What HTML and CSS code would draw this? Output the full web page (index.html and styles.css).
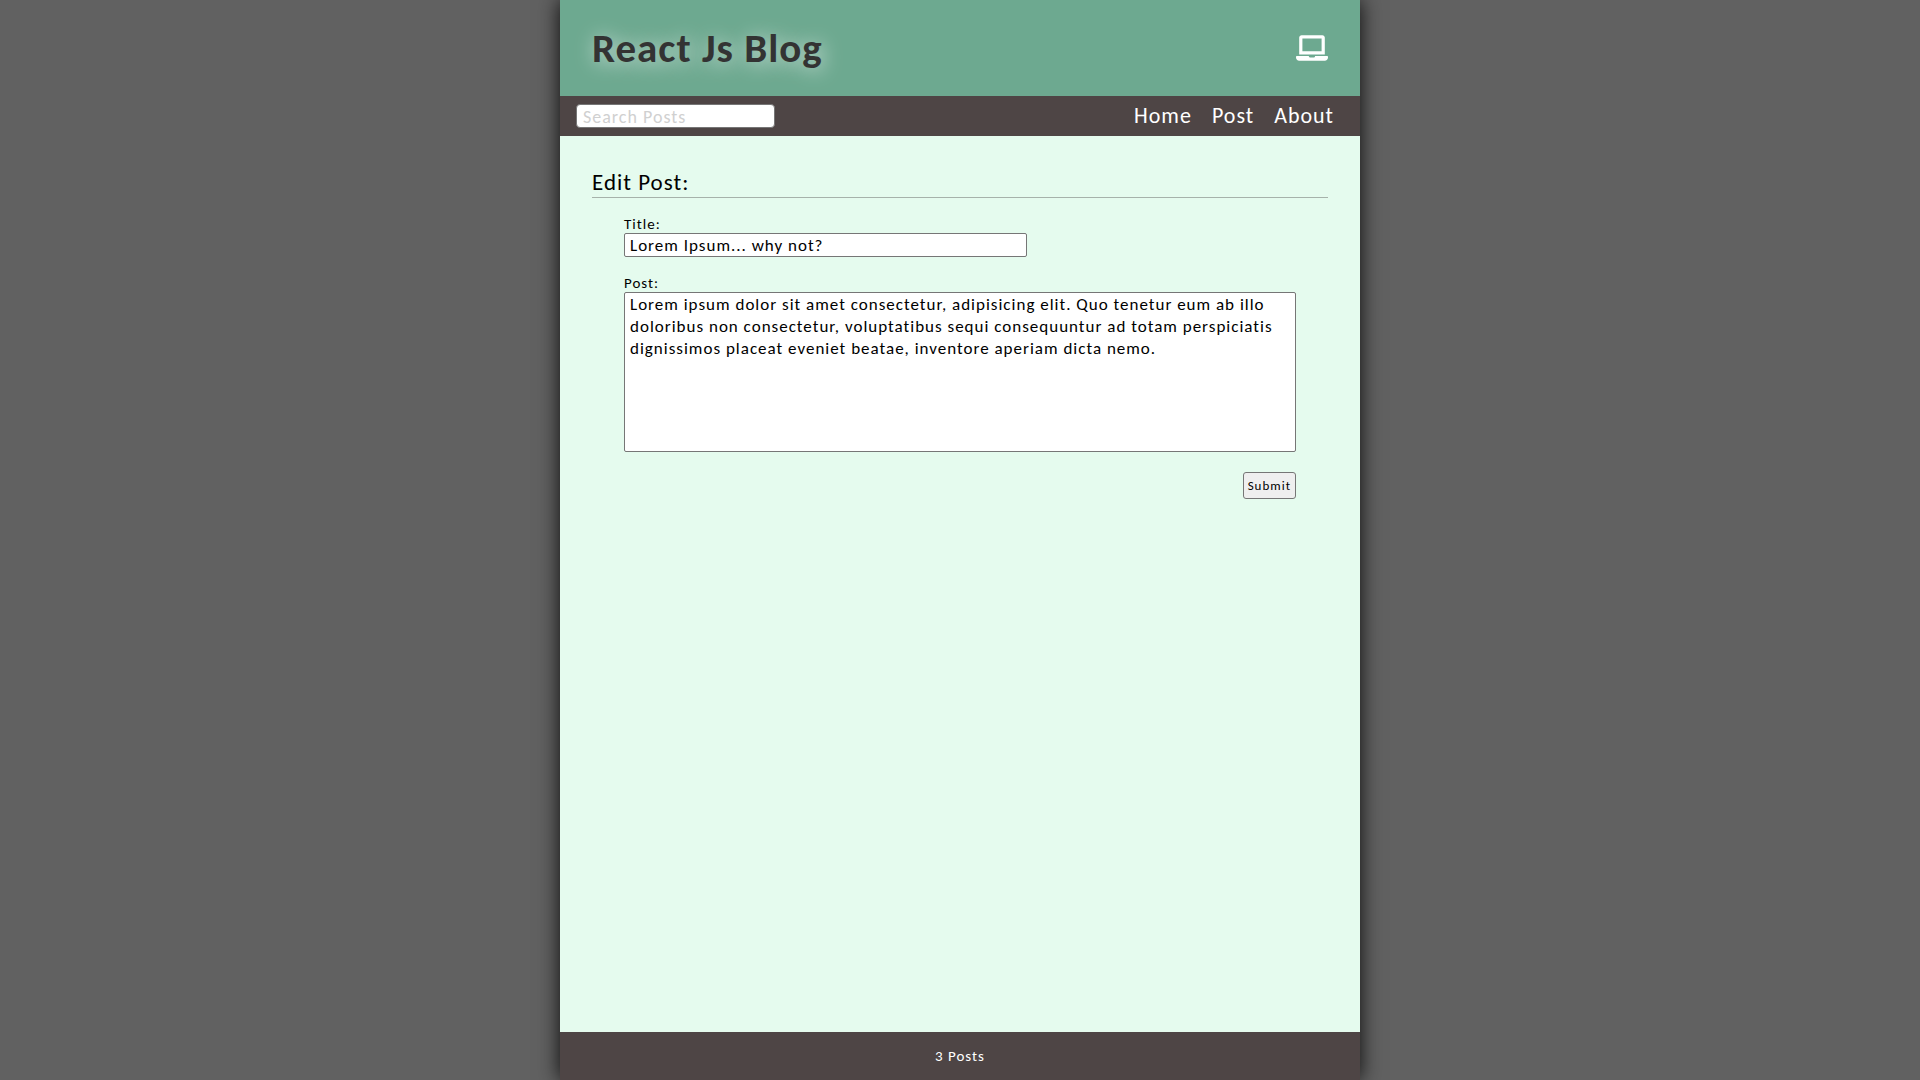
FILE: index.html
```html
<!DOCTYPE html>
<html lang="en">
<head>
<meta charset="utf-8">
<meta name="viewport" content="width=device-width, initial-scale=1">
<title>React Js Blog</title>
<link rel="stylesheet" href="styles.css">
</head>
<body>
<div class="app">
  <header class="header">
    <h1 class="header-title">React Js Blog</h1>
    <svg class="header-icon" viewBox="0 0 640 512" role="img" aria-label="Laptop"><path d="M624 416H381.54c-.74 19.81-14.71 32-32.74 32H288c-18.69 0-33.020-17.470-32.770-32H16c-8.800 0-16 7.200-16 16v16c0 35.200 28.800 64 64 64h512c35.200 0 64-28.800 64-64v-16c0-8.800-7.200-16-16-16zM576 48c0-26.400-21.600-48-48-48H112C85.600 0 64 21.600 64 48v336h512V48zm-64 272H128V64h384v256z"/></svg>
  </header>
  <nav class="nav">
    <form class="search-form">
      <input class="search-input" type="text" aria-label="Search Posts" placeholder="Search Posts">
    </form>
    <ul class="menu">
      <li><a class="menu-link" href="#home">Home</a></li>
      <li><a class="menu-link" href="#post">Post</a></li>
      <li><a class="menu-link" href="#about">About</a></li>
    </ul>
  </nav>
  <main class="main">
    <h2 class="main-title">Edit Post:</h2>
    <form class="post-form">
      <label class="label" for="post-title">Title:</label>
      <input class="field title-input" id="post-title" type="text" value="Lorem Ipsum... why not?">
      <label class="label" for="post-body">Post:</label>
      <textarea class="field body-input" id="post-body">Lorem ipsum dolor sit amet consectetur, adipisicing elit. Quo tenetur eum ab illo doloribus non consectetur, voluptatibus sequi consequuntur ad totam perspiciatis dignissimos placeat eveniet beatae, inventore aperiam dicta nemo.</textarea>
      <button class="submit" type="submit">Submit</button>
    </form>
  </main>
  <footer class="footer">3 Posts</footer>
</div>
</body>
</html>
```
FILE: styles.css
```css
* {
  box-sizing: border-box;
  margin: 0;
  padding: 0;
}

body {
  min-height: 100vh;
  background: #616161;
  color: #000;
  font-family: Calibri, Carlito, Lato, sans-serif;
  font-size: 15px;
  letter-spacing: 1px;
}

input,
textarea,
button {
  font-family: inherit;
  letter-spacing: inherit;
}

.app {
  display: flex;
  flex-direction: column;
  width: 100%;
  max-width: 800px;
  min-height: 100vh;
  margin: 0 auto;
  background: #e5fbee;
  box-shadow: 0 0 20px rgba(0, 0, 0, 0.9);
}

.header {
  display: flex;
  align-items: center;
  justify-content: space-between;
  padding: 24px 32px;
  background: #6da990;
}

.header-title {
  color: #333;
  font-size: 41px;
  line-height: 48px;
  text-shadow: 2px 2px 20px rgba(255, 255, 255, 0.7);
}

.header-icon {
  width: 32px;
  height: 26px;
  fill: #fff;
}

.nav {
  display: flex;
  align-items: center;
  justify-content: space-between;
  flex-wrap: wrap;
  padding: 8px 26px 8px 16px;
  background: #4e4545;
}

.search-input {
  display: block;
  width: 199px;
  height: 24px;
  padding: 1px 6px 0;
  border: 1px solid #767676;
  border-radius: 4px;
  background: #fff;
  font-size: 18px;
}

.search-input::placeholder {
  color: #d0d0d0;
}

.menu {
  display: flex;
  gap: 20px;
  font-size: 22px;
  line-height: 24px;
  list-style: none;
}

.menu-link {
  color: #fff;
  text-decoration: none;
}

.main {
  flex: 1;
  padding: 32px;
}

.main-title {
  border-bottom: 1px solid #a6b2aa;
  font-size: 23px;
  font-weight: 400;
  line-height: 29px;
}

.post-form {
  display: flex;
  flex-direction: column;
  align-items: flex-start;
  padding: 17px 32px;
}

.label {
  line-height: 18px;
}

.field {
  padding: 1px 5px;
  border: 1px solid #767676;
  border-radius: 2px;
  background: #fff;
  color: #000;
  font-size: 17px;
  line-height: 22px;
}

.title-input {
  width: 60%;
  height: 24px;
  margin-bottom: 17px;
}

.body-input {
  width: 100%;
  height: 160px;
  margin-bottom: 20px;
  resize: none;
}

.submit {
  align-self: flex-end;
  height: 27px;
  padding: 0 4px;
  border: 1px solid #767676;
  border-radius: 3px;
  background: #efefef;
  color: #000;
  font-size: 13px;
}

.footer {
  padding: 12px;
  background: #4e4545;
  color: #fff;
  line-height: 24px;
  text-align: center;
}
```
